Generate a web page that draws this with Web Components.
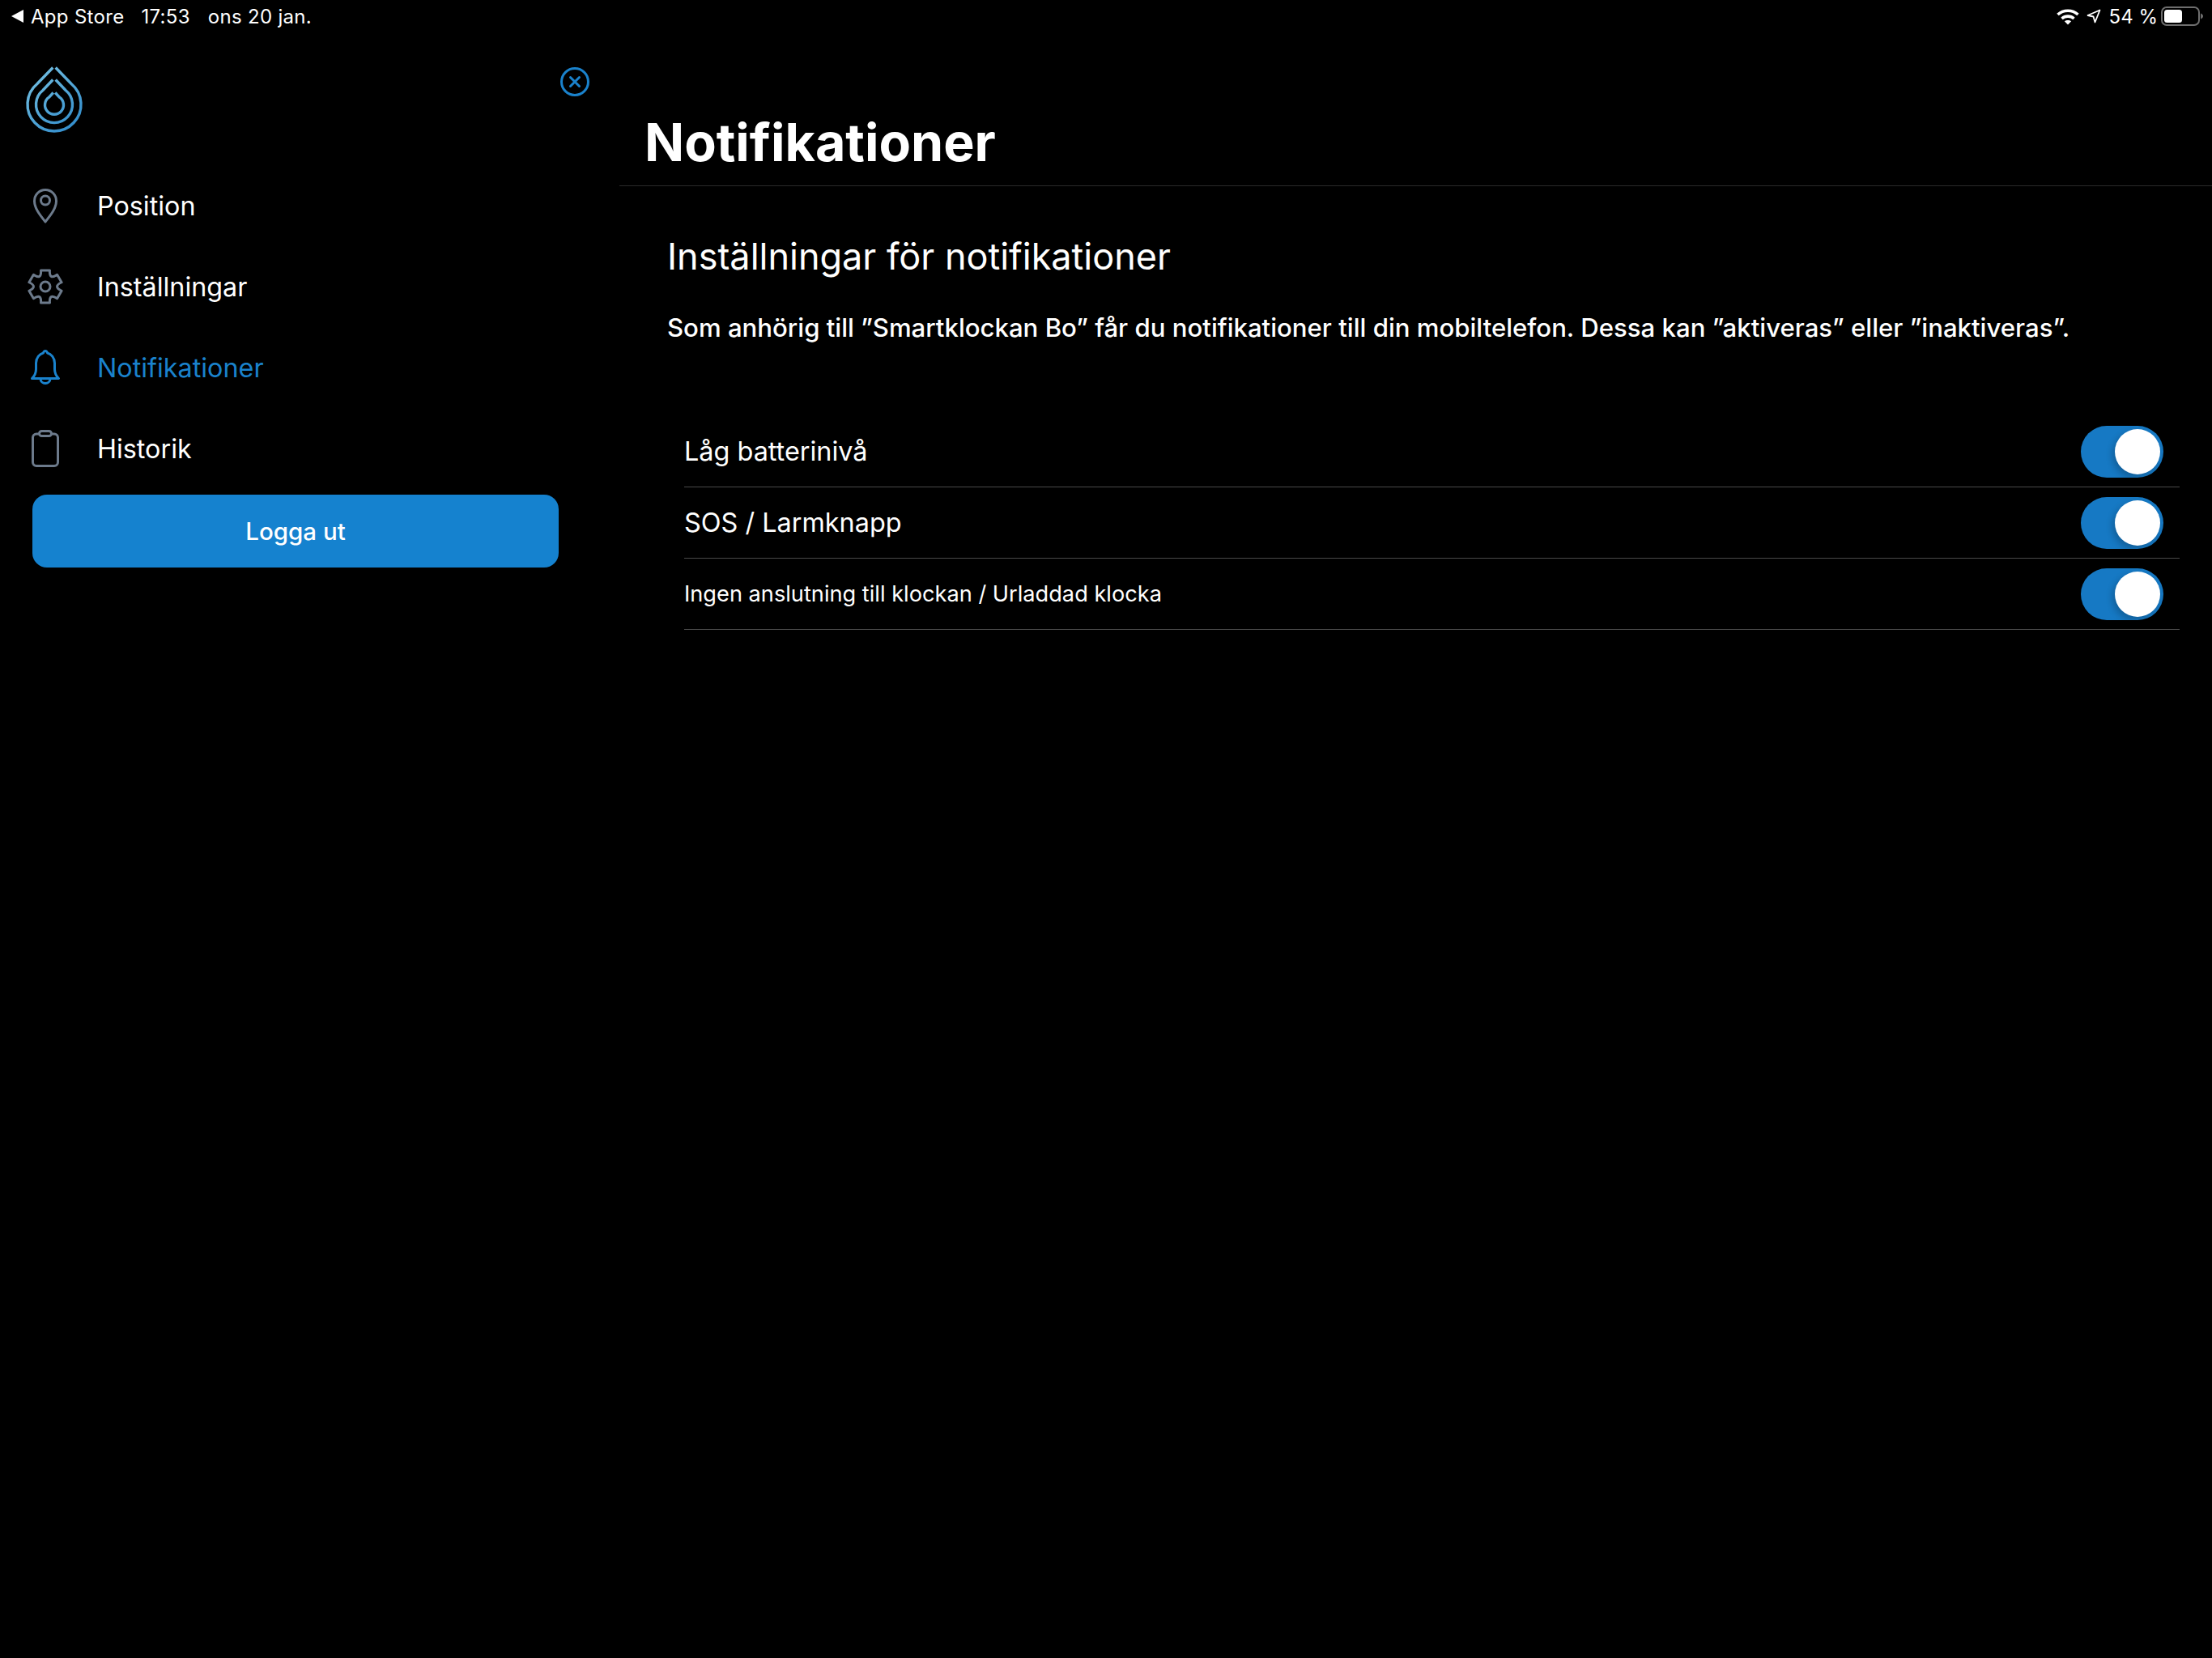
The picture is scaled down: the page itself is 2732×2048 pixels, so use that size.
<!DOCTYPE html>
<html>
<head>
<style>
	html,body{margin:0; padding:0; background:#000;}
	body{width:2732px; height:2048px; overflow:hidden; font-family:"Inter","Liberation Sans",sans-serif; color:#fff;}
</style>
</head>
<body>
<app-shell>
	<status-bar slot="status"></status-bar>
	<side-menu slot="side">
		<menu-item label="Position" icon="pin"></menu-item>
		<menu-item label="Inställningar" icon="gear"></menu-item>
		<menu-item label="Notifikationer" icon="bell" active></menu-item>
		<menu-item label="Historik" icon="clip"></menu-item>
	</side-menu>
	<notif-page slot="main">
		<notif-row size="32.4">Låg batterinivå</notif-row>
		<notif-row size="32.4">SOS / Larmknapp</notif-row>
		<notif-row size="27.2">Ingen anslutning till klockan / Urladdad klocka</notif-row>
	</notif-page>
</app-shell>

<script>
	class AppShell extends HTMLElement{
		connectedCallback(){
			this.attachShadow({mode:'open'});
			this.shadowRoot.innerHTML = `
			<style>
				:host{display:flex; flex-direction:column; width:2732px; height:2048px;}
				.cols{display:flex; flex:1;}
				::slotted([slot=side]){width:765px; flex:none;}
				::slotted([slot=main]){flex:1;}
			</style>
			<slot name="status"></slot>
			<div class="cols"><slot name="side"></slot><slot name="main"></slot></div>`;
		}
	}
	customElements.define('app-shell', AppShell);

	class StatusBar extends HTMLElement{
		connectedCallback(){
			this.attachShadow({mode:'open'});
			this.shadowRoot.innerHTML = `
			<style>
				:host{display:flex; align-items:center; height:40px; padding:0 11px 0 14px; font-size:24px; color:#fff; letter-spacing:.3px;}
				.l{display:flex; align-items:center; flex:1;}
				.r{display:flex; align-items:center; letter-spacing:0;}
				svg{display:block; flex:none;}
				.app{margin-left:9px; margin-right:21px;}
				.time{margin-right:22px;}
			</style>
			<div class="l">
				<svg width="15" height="16" viewBox="0 0 15 16"><path d="M0 8 15 0V16Z" fill="#fff"/></svg>
				<span class="app">App Store</span><span class="time">17:53</span><span>ons 20 jan.</span>
			</div>
			<div class="r">
				<svg width="28" height="21" viewBox="0 0 28 21" fill="none" stroke="#fff" stroke-width="3.6">
					<path d="M1.500 8C8.500 1.600 19.500 1.600 26.500 8"/>
					<path d="M6.500 13C10.800 9.200 17.200 9.200 21.500 13"/>
					<path d="M14 20.500 9.800 16.300C12.200 14.500 15.800 14.500 18.200 16.300Z" fill="#fff" stroke="none"/>
				</svg>
				<svg style="margin-left:9px" width="18" height="18" viewBox="0 0 18 18" fill="none" stroke="#fff" stroke-width="1.800" stroke-linejoin="round"><path d="M16.500 1.500 1.500 8 8.500 9.500 10.500 16.500Z"/></svg>
				<span style="margin-left:10px">54 %</span>
				<svg style="margin-left:4px" width="52" height="24" viewBox="0 0 52 24">
					<rect x="1" y="1" width="46" height="22" rx="6" fill="none" stroke="#6e6e6e" stroke-width="2"/>
					<rect x="4" y="4" width="22" height="16" rx="3.500" fill="#fff"/>
					<path d="M49 8.500C51 9.500 52 10.500 52 12S51 14.500 49 15.500Z" fill="#6e6e6e"/>
				</svg>
			</div>`;
		}
	}
	customElements.define('status-bar', StatusBar);

	class DropLogo extends HTMLElement{
		connectedCallback(){
			this.attachShadow({mode:'open'});
			// tre droppar i varandra, delade i toppen
			this.shadowRoot.innerHTML = `
			<style>:host{display:block; width:76px; height:86px;} svg{display:block;}</style>
			<svg width="76" height="86" viewBox="29 80 76 86" fill="none" stroke="url(#g)" stroke-width="3.400">
				<defs><linearGradient id="g" gradientUnits="userSpaceOnUse" x1="35" y1="90" x2="100" y2="165">
					<stop offset="0" stop-color="#74c0e2"/><stop offset="1" stop-color="#2a86c8"/></linearGradient></defs>
				<path d="M65.300 82.500 46 102.500A33 33 0 1 0 88 102.500L68.700 82.500"/>
				<path d="M65.300 97.500 53 110.500A22.500 22.500 0 1 0 81 110.500L68.700 97.500"/>
				<path d="M65.800 113.500 60.500 119.200A11.500 11.500 0 1 0 73.500 119.200L68.200 113.500"/>
			</svg>`;
		}
	}
	customElements.define('drop-logo', DropLogo);

	// kugghjul med sex tänder, räknas ut runt mitten
	function gearPath(){
		let rot = (x,y,a)=>(22 + x*Math.cos(a) - y*Math.sin(a)).toFixed(2) + ' ' + (24 + x*Math.sin(a) + y*Math.cos(a)).toFixed(2);
		let d = '';
		for(let i=0; i<6; i++){
			let a = i*Math.PI/3;
			d += (i ? 'L' : 'M') + rot(-5.5,-20,a) + 'L' + rot(5.5,-20,a) + 'Q' + rot(4.5,-7.8,a) + ' ' + rot(14.57,-14.76,a);
		}
		return d + 'Z';
	}

	const ICONS = {
		pin:`<path d="M22 44C16 36.500 8.500 27.500 8.500 18.500 8.500 10.500 14.500 4.500 22 4.500S35.500 10.500 35.500 18.500C35.500 27.500 28 36.500 22 44Z"/><circle cx="22" cy="17.500" r="5.500"/>`,
		gear:`<path d="${gearPath()}"/><circle cx="22" cy="24" r="6"/>`,
		bell:`<path d="M5.500 37.500C8.500 34.500 10.500 31.500 10.500 26V18.500C10.500 12 15 7 19.500 6C20 4 21 3.500 22 3.500S24 4 24.500 6C29 7 33.500 12 33.500 18.500V26C33.500 31.500 35.500 34.500 38.500 37.500Z"/><path d="M16 37.500C16 41.500 19 43.500 22 43.500S28 41.500 28 37.500"/>`,
		clip:`<rect x="6.500" y="6" width="31" height="39.500" rx="4.500"/><rect x="14.500" y="2.500" width="15" height="6" rx="3" fill="#000"/>`
	};

	class MenuItem extends HTMLElement{
		connectedCallback(){
			let active = this.hasAttribute('active');
			this.attachShadow({mode:'open'});
			this.shadowRoot.innerHTML = `
			<style>
				:host{display:flex; align-items:center; height:100px; padding-left:34px; gap:42px; font-size:32.3px; color:${active ? '#1a82cc' : '#fff'};}
				svg{display:block; flex:none; fill:none; stroke:${active ? '#1a82cc' : '#6c7a8b'}; stroke-width:3; stroke-linejoin:round; stroke-linecap:round;}
			</style>
			<svg width="44" height="48" viewBox="0 0 44 48">${ICONS[this.getAttribute('icon')]}</svg>
			<span>${this.getAttribute('label')}</span>`;
		}
	}
	customElements.define('menu-item', MenuItem);

	class SideMenu extends HTMLElement{
		connectedCallback(){
			this.attachShadow({mode:'open'});
			this.shadowRoot.innerHTML = `
			<style>
				:host{display:block;}
				.top{display:flex; justify-content:space-between; align-items:flex-start; height:164px; padding:41px 0 0 29px; box-sizing:border-box;}
				.close{margin:1px 36px 0 0;}
				svg{display:block;}
				button{display:block; width:650px; height:90px; margin:7px 0 0 40px; border:0; border-radius:18px; background:#1582cf; color:#fff; font:500 29.5px "Inter","Liberation Sans",sans-serif;}
			</style>
			<div class="top">
				<drop-logo></drop-logo>
				<svg class="close" width="38" height="38" viewBox="0 0 38 38" fill="none" stroke="#1a82cc" stroke-width="3" stroke-linecap="round">
					<circle cx="19" cy="19" r="16.500"/><path d="M13.500 13.500 24.500 24.500M24.500 13.500 13.500 24.500"/>
				</svg>
			</div>
			<slot></slot>
			<button>Logga ut</button>`;
		}
	}
	customElements.define('side-menu', SideMenu);

	class NotifRow extends HTMLElement{
		connectedCallback(){
			this.attachShadow({mode:'open'});
			this.shadowRoot.innerHTML = `
			<style>
				:host{display:flex; align-items:center; justify-content:space-between; height:87px; border-bottom:1px solid #4a4a4a; padding-right:20px; font-size:${this.getAttribute('size')}px; color:#fff;}
				.sw{width:102px; height:64px; border-radius:32px; background:#1679c4; display:flex; align-items:center; justify-content:flex-end; padding-right:4px; box-sizing:border-box;}
				.sw i{display:block; width:56px; height:56px; border-radius:50%; background:#fff; box-shadow:-3px 4px 8px rgba(0,0,0,.22);}
			</style>
			<slot></slot>
			<div class="sw"><i></i></div>`;
		}
	}
	customElements.define('notif-row', NotifRow);

	class NotifPage extends HTMLElement{
		connectedCallback(){
			this.attachShadow({mode:'open'});
			this.shadowRoot.innerHTML = `
			<style>
				:host{display:block;}
				header{height:190px; box-sizing:border-box; border-bottom:1px solid #2a2a2a; padding:94px 0 0 31px;}
				h1{margin:0; font-size:64.5px; font-weight:700; line-height:84px;}
				.body{padding:0 40px 0 59px;}
				h2{margin:57px 0 0; font-size:45px; font-weight:400; line-height:60px;}
				p{margin:36px 0 0; font-size:31.15px; font-weight:500; line-height:44px;}
				.rows{margin:87px 0 0 21px;}
			</style>
			<header><h1>Notifikationer</h1></header>
			<div class="body">
				<h2>Inställningar för notifikationer</h2>
				<p>Som anhörig till ”Smartklockan Bo” får du notifikationer till din mobiltelefon. Dessa kan ”aktiveras” eller ”inaktiveras”.</p>
				<div class="rows"><slot></slot></div>
			</div>`;
		}
	}
	customElements.define('notif-page', NotifPage);
</script>
</body>
</html>
